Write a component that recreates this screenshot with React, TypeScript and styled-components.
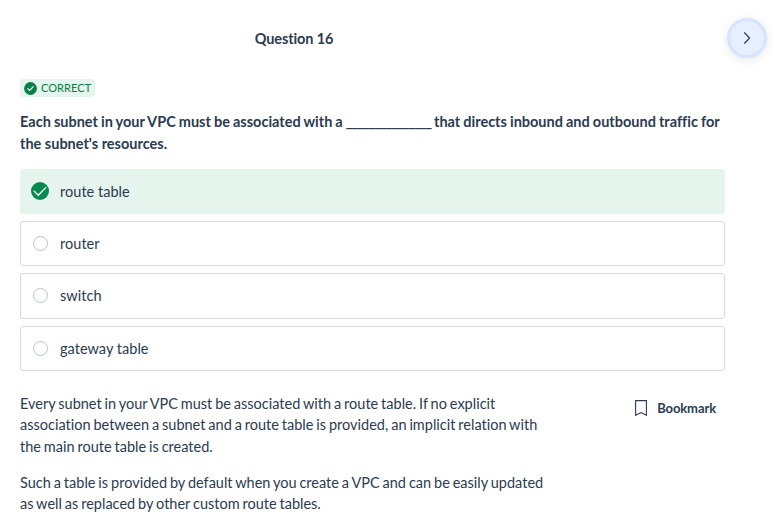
import React from 'react';
import styled, { createGlobalStyle } from 'styled-components';

const Global = createGlobalStyle`
  * { box-sizing: border-box; }
  body { margin: 0; background: #fff; color: #2b3b50; font: 400 14.5px/21.5px Lato, sans-serif; overflow: hidden; }
  p { margin: 0; }
`;
const Page = styled.main`width: 781px; height: 520px; overflow: hidden; display: flex; flex-direction: column; font-variant-ligatures: none;`;
const Header = styled.header`height: 79px; padding: 17.6px 14px 0 0; display: grid; grid-template-columns: 588px 1fr; align-items: start;`;
const Title = styled.h1`margin: 10.4px 0 0; font-size: 14.5px; line-height: 22px; font-weight: 700; text-align: center; letter-spacing: -.12px;`;
const Next = styled.button`justify-self: end; width: 40px; height: 40px; border: 3px solid #d6e5ff; border-radius: 50%; background: #e6efff; padding: 0; display: grid; place-items: center; box-shadow: 0 2px 10px rgba(40, 50, 70, .11);`;
const Content = styled.section`width: 725px; padding-left: 20px; display: flex; flex-direction: column;`;
const Badge = styled.div`align-self: flex-start; width: 75px; height: 18px; padding-left: 4px; display: flex; align-items: center; gap: 4px; border-radius: 3px; background: #e5f4ed; color: #107c47; font-size: 11px; line-height: 18px; letter-spacing: .06px; white-space: nowrap;`;
const Question = styled.h2`margin: 14px 0 13.8px; font-size: 14.5px; line-height: 22px; font-weight: 700; white-space: nowrap;`;
const QuestionText = styled.span`word-spacing: -.46px;`;
const Blank = styled.span`letter-spacing: -1.09px;`;
const Options = styled.div`display: grid; gap: 7px;`;
const Option = styled.div<{ $correct?: boolean }>`
  height: 45.3px; padding-top: .4px; display: flex; align-items: center; border-radius: 3px; letter-spacing: .03px; line-height: 22px;
  border: 1px solid ${p => p.$correct ? '#e5f4ed' : '#d7dae0'};
  background: ${p => p.$correct ? '#e5f4ed' : '#fff'};
`;
const Mark = styled.span`width: 39px; padding: 0 0 1px 10px; display: flex;`;
const Radio = styled.span`width: 15px; height: 15px; margin-left: 2px; border: 1px solid #bbc0ca; border-radius: 50%;`;
const Footer = styled.div`display: flex; justify-content: space-between; margin-top: 21.8px;`;
const Explanation = styled.div`display: grid; gap: 14.5px; white-space: nowrap; word-spacing: -.8px;`;
const Bookmark = styled.button`height: 22px; margin: 4px 9px 0 0; padding: 0; border: 0; background: none; color: inherit; display: flex; align-items: center; gap: 10px; font: 700 13px/20px Lato, sans-serif; letter-spacing: -.1px;`;

const BadgeCheck = () => <svg width="13" height="13" viewBox="0 0 13 13"><circle cx="6.5" cy="6.5" r="6.4" fill="#07804a" /><path d="m3.5 6.4 2.1 2 4-4" fill="none" stroke="#fff" strokeWidth="1.2" /></svg>;
const AnswerCheck = () => <svg width="18" height="18" viewBox="0 0 18 18"><circle cx="9" cy="9" r="9" fill="#078a4e" /><path d="m2.8 8.7 4.4 4.6 8-8.2" fill="none" stroke="#fff" strokeWidth="1.25" /></svg>;

export default function App() {
  return <><Global /><Page>
    <Header><Title>Question 16</Title><Next aria-label="Next question"><svg width="12" height="14" viewBox="0 0 12 14"><path d="m3.3 1.5 5.3 5.5-5.3 5.5" fill="none" stroke="#2b3b50" strokeWidth="1.2" /></svg></Next></Header>
    <Content>
      <Badge><BadgeCheck />CORRECT</Badge>
      <Question><QuestionText>Each subnet in your VPC must be associated with a <Blank>_______________</Blank> that directs inbound and outbound traffic for</QuestionText><br />the subnet's resources.</Question>
      <Options>{['route table', 'router', 'switch', 'gateway table'].map((name, i) => <Option key={name} $correct={i === 0}><Mark>{i === 0 ? <AnswerCheck /> : <Radio />}</Mark>{name}</Option>)}</Options>
      <Footer><Explanation>
        <p>Every subnet in your VPC must be associated with a route table. If no explicit<br />association between a subnet and a route table is provided, an implicit relation with<br />the main route table is created.</p>
        <p>Such a table is provided by default when you create a VPC and can be easily updated<br />as well as replaced by other custom route tables.</p>
      </Explanation><Bookmark><svg width="12" height="16" viewBox="0 0 12 16"><path d="M.6.6h10.8v14.7L6 12.5.6 15.3z" fill="none" stroke="currentColor" strokeWidth="1.1" /></svg>Bookmark</Bookmark></Footer>
    </Content>
  </Page></>;
}
